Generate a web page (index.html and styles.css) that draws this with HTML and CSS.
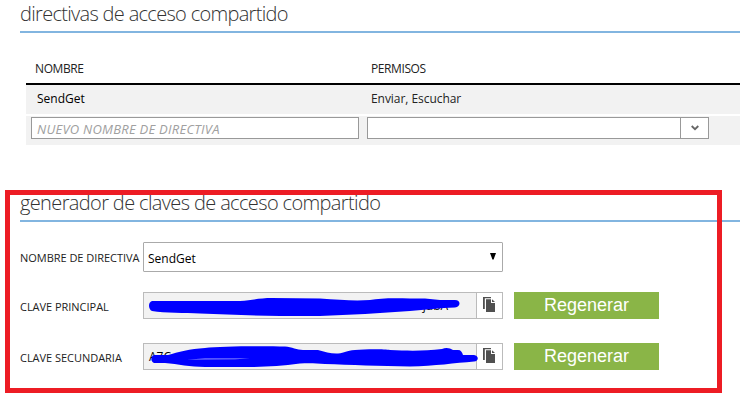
FILE: index.html
```html
<!DOCTYPE html>
<html lang="es">
<head>
<meta charset="utf-8">
<title>Directivas de acceso compartido</title>
<link rel="stylesheet" href="styles.css">
</head>
<body>
<section class="policies">
  <h2 class="heading">directivas de acceso compartido</h2>
  <div class="table">
    <div class="row head"><span class="c-name">NOMBRE</span><span class="c-perm">PERMISOS</span></div>
    <div class="row data"><span class="c-name send">SendGet</span><span class="c-perm enviar">Enviar, Escuchar</span></div>
    <div class="row edit">
      <div class="new-name">NUEVO NOMBRE DE DIRECTIVA</div>
      <div class="combo"><div class="combo-toggle"><svg width="8" height="6" viewBox="0 0 8 6"><path d="M.7 1 4 4.2 7.3 1" fill="none" stroke="#666" stroke-width="1.8"/></svg></div></div>
    </div>
  </div>
</section>
<section class="keys">
  <h2 class="heading gen">generador de claves de acceso compartido</h2>
  <div class="field policy">
    <label>NOMBRE DE DIRECTIVA</label>
    <div class="select"><span class="send">SendGet</span><svg width="6" height="7" viewBox="0 0 6 7"><path d="M0 0H6L3.6 6.5H2.4Z"/></svg></div>
  </div>
  <div class="field">
    <label>CLAVE PRINCIPAL</label>
    <div class="key"><div class="value"><span class="end">jubA=</span></div><div class="copy"><svg width="12" height="15" viewBox="0 0 12 15"><path d="M0 0H8V1.2H1.8V12H0Z" fill="#505050"/><path d="M3 2.200H8V6H12V15H3Z" fill="#505050"/><path d="M9 2.200 12 5H9Z" fill="#505050"/></svg></div></div>
    <button class="regen">Regenerar</button>
    <svg class="scribble" width="320" height="27" viewBox="143 292 320 27"><path fill="#00f" d="M152 301H240C252 300 260 298 272 298L320 298.500C340 300 355 301 370 300C380 298 395 298 410 298.500H425L440 300H455C461 300 461 307 455 307.500C440 308 425 309.500 410 311C380 313 350 315 320 316H280C250 316 225 314 200 313.500C185 313 165 313 152 311C148 309 148 302 152 301Z"/></svg>
  </div>
  <div class="field second">
    <label>CLAVE SECUNDARIA</label>
    <div class="key"><div class="value"><span>A7C</span></div><div class="copy"><svg width="12" height="15" viewBox="0 0 12 15"><path d="M0 0H8V1.2H1.8V12H0Z" fill="#505050"/><path d="M3 2.200H8V6H12V15H3Z" fill="#505050"/><path d="M9 2.200 12 5H9Z" fill="#505050"/></svg></div></div>
    <button class="regen">Regenerar</button>
    <svg class="scribble" width="340" height="27" viewBox="143 343 340 27"><path fill="#00f" d="M154 355H168C178 352 190 349 205 348C220 346 265 346 285 346.500C292 347 297 350 303 350H318C325 352 332 354 338 353.500C345 353 346 350.500 355 350C365 349 385 349 390 350C410 351 425 351 442 349C446 347 450 348 453 350H458C461 350 462 352 463 355H474C479 356 479 361 474 361.500C455 363 435 366 410 366.500C380 366 350 365 325 364C315 363 307 363 300 363.500C280 366 265 367 245 367H205C190 367 178 364 165 363H154C150 361 151 356 154 355Z"/><path d="M187 359.500 205 358.500 250 358.500 235 359.200Z" fill="#aaf"/></svg>
  </div>
</section>
<div class="frame"></div>
</body>
</html>
```
FILE: styles.css
```css
* { box-sizing: border-box; }
body { margin: 0; width: 740px; height: 402px; overflow: hidden; background: #fff; color: #222; font: 12px "Open Sans", "Noto Sans", sans-serif; position: relative; }
.heading { margin: 0 0 0 20px; height: 33px; padding-top: 1px; border-bottom: 2px solid #82b5e0; font-size: 20px; line-height: 26px; font-weight: 300; letter-spacing: -0.69px; color: #333; white-space: nowrap; }
.heading.gen { letter-spacing: -0.63px; }
.table { margin-left: 26px; padding-top: 20px; }
.row { display: flex; align-items: center; white-space: nowrap; }
.head { height: 32px; border-bottom: 2px solid #000; letter-spacing: -0.4px; padding-left: 9px; }
.head .c-name { width: 336px; }
.data { height: 29px; padding-left: 11px; padding-bottom: 2px; background: #f2f2f2; }
.data .c-name { width: 334px; }
.enviar { letter-spacing: -0.05px; }
.send { color: #000; }
.edit { height: 29px; margin-top: 2px; padding: 1px 0 0 5px; align-items: flex-start; gap: 8px; background: #f2f2f2; }
.new-name { width: 328px; height: 22px; padding-left: 5px; border: 1px solid #999; background: #fff; color: #a0a0a0; font-size: 13px; letter-spacing: 0.25px; font-style: italic; line-height: 22px; }
.combo { width: 342px; height: 22px; display: flex; justify-content: flex-end; border: 1px solid #999; background: #fff; }
.combo-toggle { width: 28px; border-left: 1px solid #999; display: flex; align-items: center; justify-content: center; }
.keys { padding-top: 44px; }
.field { position: relative; display: flex; align-items: center; height: 27px; margin: 20px 0 0 20px; }
.field label { width: 123px; font-size: 11px; white-space: nowrap; letter-spacing: -0.03px; padding-top: 2px; }
.policy { height: 30px; }
.field.policy label { padding-top: 1px; }
.second { margin-top: 24px; }
.select { width: 360px; height: 30px; display: flex; align-items: center; justify-content: space-between; padding: 2px 6px 0 4px; border: 1px solid #aaa; border-radius: 1px; }
.select svg { margin-top: -4px; }
.key { width: 360px; height: 27px; display: flex; border: 1px solid #bbb; }
.value { flex: 1; display: flex; padding: 0 21px 0 5px; background: #f2f2f2; color: #000; line-height: 26px; }
.end { margin-left: auto; }
.copy { width: 26px; border-left: 1px solid #bbb; padding: 4px 0 0 6px; line-height: 0; }
.regen { width: 145px; height: 27px; margin-left: 11px; padding: 0; border: 0; background: #8ab547; color: #fff; font: 18px "Liberation Sans", Arial, sans-serif; }
.scribble { position: absolute; left: 123px; top: 0; }
.frame { position: absolute; left: 5px; top: 190px; width: 717px; height: 203px; border: 5px solid #ed1c24; }
```
